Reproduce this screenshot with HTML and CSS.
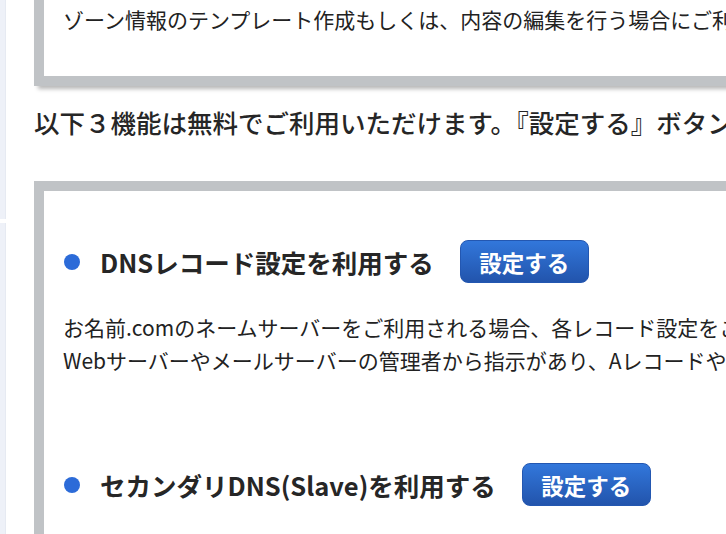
FILE: index.html
```html
<!DOCTYPE html>
<html lang="ja">
<head>
<meta charset="utf-8">
<title>DNS設定</title>
<link rel="stylesheet" href="styles.css">
</head>
<body>
<div class="layout">
  <aside class="sidebar">
    <div class="sidebar-top"></div>
    <div class="sidebar-bottom"></div>
  </aside>
  <main class="main">
    <section class="box box-top">
      <p class="box-text">ゾーン情報のテンプレート作成もしくは、内容の編集を行う場合にご利用ください。</p>
    </section>

    <h2 class="lead">以下３機能は無料でご利用いただけます。『設定する』ボタンをクリックしてください。</h2>

    <section class="box box-features">
      <div class="feature">
        <div class="feature-head">
          <span class="dot"></span>
          <h3 class="feature-title">DNSレコード設定を利用する</h3>
          <a class="btn" href="#">設定する</a>
        </div>
        <p class="feature-desc">お名前.comのネームサーバーをご利用される場合、各レコード設定をこちらから行えます。<br>Webサーバーやメールサーバーの管理者から指示があり、Aレコードやその他のレコードを設定する場合にご利用ください。</p>
      </div>

      <div class="feature feature-second">
        <div class="feature-head">
          <span class="dot"></span>
          <h3 class="feature-title">セカンダリDNS(Slave)を利用する</h3>
          <a class="btn" href="#">設定する</a>
        </div>
      </div>
    </section>
  </main>
</div>
</body>
</html>
```

FILE: styles.css
```css
* {
  box-sizing: border-box;
}

html, body {
  margin: 0;
  padding: 0;
  background: #ffffff;
  overflow: hidden;
  height: 100%;
}

body {
  font-family: "Noto Sans CJK JP", "Noto Sans", sans-serif;
  color: #262626;
}

.layout {
  display: flex;
  height: 534px;
  overflow: hidden;
}

.sidebar {
  width: 6px;
  flex: none;
  display: flex;
  flex-direction: column;
  gap: 4px;
}

.sidebar-top {
  height: 219px;
  background: #eef1f8;
  border-right: 1px solid #e6eaf2;
}

.sidebar-bottom {
  flex: 1;
  background: #eef1f8;
  border-right: 1px solid #e6eaf2;
}

.main {
  flex: 1;
  min-width: 0;
  padding-left: 28px;
  overflow: hidden;
}

.box {
  width: 980px;
  border: 10px solid #c0c3c6;
  background: #ffffff;
}

.box-top {
  margin-top: -40px;
  padding: 34px 0 42px 19px;
  box-shadow: 3px 4px 4px -1px rgba(0, 0, 0, 0.28);
}

.box-text {
  margin: 0;
  font-size: 21px;
  line-height: 30px;
  white-space: nowrap;
  color: #222222;
}

.lead {
  margin: 18px 0 41px 0;
  font-size: 25.5px;
  line-height: 36px;
  font-weight: 500;
  white-space: nowrap;
  color: #262626;
}

.box-features {
  padding: 49px 0 40px 19px;
  height: 600px;
}

.feature-head {
  display: flex;
  align-items: center;
  height: 43px;
}

.dot {
  width: 16px;
  height: 16px;
  border-radius: 50%;
  background: #2c6bd8;
  margin-left: 1px;
  margin-right: 20px;
  flex: none;
}

.feature-title {
  margin: 0;
  font-size: 25.5px;
  font-weight: 700;
  line-height: 43px;
  white-space: nowrap;
  color: #262626;
}

.btn {
  margin-left: 26px;
  width: 129px;
  height: 43px;
  flex: none;
  display: flex;
  align-items: center;
  justify-content: center;
  border-radius: 8px;
  background: linear-gradient(#3277db, #2254ac);
  color: #ffffff;
  font-size: 22.5px;
  font-weight: 700;
  text-decoration: none;
  border: 1px solid #2357b1;
}

.feature-desc {
  margin: 28px 0 0 0;
  font-size: 21px;
  line-height: 33px;
  white-space: nowrap;
  color: #222222;
}

.feature-second {
  margin-top: 86px;
}
```
